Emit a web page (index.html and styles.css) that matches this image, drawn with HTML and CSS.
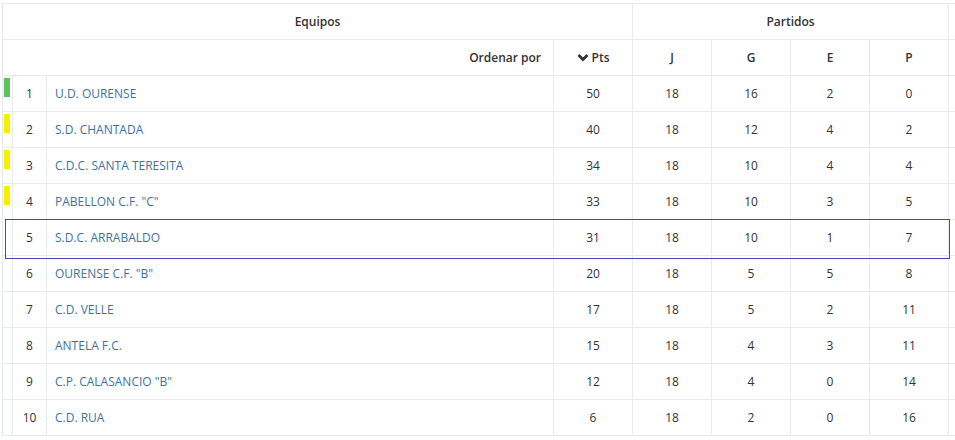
FILE: index.html
```html
<!DOCTYPE html>
<html lang="es">
<head>
<meta charset="utf-8">
<title>Clasificación</title>
<link rel="stylesheet" href="styles.css">
</head>
<body>
<div class="wrap">
  <table class="standings">
    <colgroup>
      <col class="c-mark"><col class="c-pos"><col class="c-team"><col class="c-num"><col class="c-num"><col class="c-num"><col class="c-num"><col class="c-num"><col class="c-extra">
    </colgroup>
    <thead>
      <tr class="h1">
        <th colspan="4">Equipos</th>
        <th colspan="4">Partidos</th>
        <th></th>
      </tr>
      <tr class="h2">
        <th colspan="3" class="sort-label">Ordenar por</th>
        <th><svg class="chev" width="12" height="9" viewBox="0 0 12 9"><polyline points="1.5,2 6,6.5 10.5,2" fill="none" stroke="#333" stroke-width="2.8"/></svg>Pts</th>
        <th>J</th><th>G</th><th>E</th><th>P</th>
        <th></th>
      </tr>
    </thead>
    <tbody>
      <tr><td class="mark"><span class="bar green"></span></td><td class="pos">1</td><td class="team">U.D. OURENSE</td><td>50</td><td>18</td><td>16</td><td>2</td><td>0</td><td></td></tr>
      <tr><td class="mark"><span class="bar yellow"></span></td><td class="pos">2</td><td class="team">S.D. CHANTADA</td><td>40</td><td>18</td><td>12</td><td>4</td><td>2</td><td></td></tr>
      <tr><td class="mark"><span class="bar yellow"></span></td><td class="pos">3</td><td class="team">C.D.C. SANTA TERESITA</td><td>34</td><td>18</td><td>10</td><td>4</td><td>4</td><td></td></tr>
      <tr><td class="mark"><span class="bar yellow"></span></td><td class="pos">4</td><td class="team">PABELLON C.F. "C"</td><td>33</td><td>18</td><td>10</td><td>3</td><td>5</td><td></td></tr>
      <tr class="own"><td class="mark"></td><td class="pos">5</td><td class="team">S.D.C. ARRABALDO</td><td>31</td><td>18</td><td>10</td><td>1</td><td>7</td><td></td></tr>
      <tr><td class="mark"></td><td class="pos">6</td><td class="team">OURENSE C.F. "B"</td><td>20</td><td>18</td><td>5</td><td>5</td><td>8</td><td></td></tr>
      <tr><td class="mark"></td><td class="pos">7</td><td class="team">C.D. VELLE</td><td>17</td><td>18</td><td>5</td><td>2</td><td>11</td><td></td></tr>
      <tr><td class="mark"></td><td class="pos">8</td><td class="team">ANTELA F.C.</td><td>15</td><td>18</td><td>4</td><td>3</td><td>11</td><td></td></tr>
      <tr><td class="mark"></td><td class="pos">9</td><td class="team">C.P. CALASANCIO "B"</td><td>12</td><td>18</td><td>4</td><td>0</td><td>14</td><td></td></tr>
      <tr><td class="mark"></td><td class="pos">10</td><td class="team">C.D. RUA</td><td>6</td><td>18</td><td>2</td><td>0</td><td>16</td><td></td></tr>
    </tbody>
  </table>
  <div class="own-box"></div>
</div>
</body>
</html>
```
FILE: styles.css
```css
html, body {
  margin: 0;
  padding: 0;
  background: #fff;
  overflow: hidden;
}
body {
  font-family: "Open Sans", "Noto Sans", sans-serif;
  font-size: 12px;
  color: #333;
}
.wrap {
  position: relative;
  padding: 3px 0 0 2px;
  width: 1100px;
}
.standings {
  border-collapse: collapse;
  table-layout: fixed;
  width: 1040px;
}
.c-mark { width: 10px; }
.c-pos { width: 34px; }
.c-team { width: 507px; }
.c-num { width: 79px; }
.c-extra { width: 93px; }
.standings th,
.standings td {
  border: 1px solid #e8ebee;
  height: 35px;
  padding: 0;
  text-align: center;
  vertical-align: middle;
  white-space: nowrap;
}
.standings th {
  font-weight: 600;
  color: #333;
}
.standings .sort-label {
  text-align: right;
  padding-right: 12px;
}
.chev {
  vertical-align: middle;
  margin-right: 3px;
  position: relative;
  top: -1px;
}
.standings td.mark {
  vertical-align: top;
  text-align: left;
}
.bar {
  display: block;
  width: 6px;
  height: 19px;
  margin: 2px 0 0 1px;
}
.bar.green { background: #5cc35c; }
.bar.yellow { background: #f6f000; }
.standings td.pos {
  color: #333;
}
.standings td.team {
  text-align: left;
  padding-left: 8px;
  color: #3e72a6;
}
.own-box {
  position: absolute;
  left: 5px;
  top: 219px;
  width: 943px;
  height: 38px;
  border: 1px solid #4848b0;
  box-sizing: content-box;
  pointer-events: none;
}
```
